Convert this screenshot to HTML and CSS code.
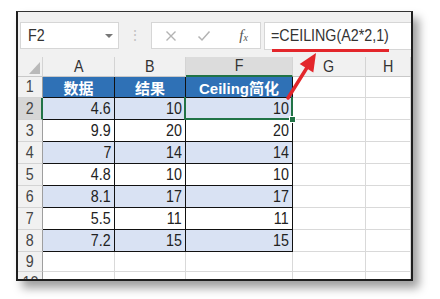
FILE: index.html
```html
<!DOCTYPE html>
<html>
<head>
<meta charset="utf-8">
<link rel="stylesheet" href="styles.css">
</head>
<body>
<div class="frame">
  <div class="fbar">
    <div class="namebox"><span class="nm nx nl">F2</span><span class="dd"></span></div>
    <div class="dots">⋮</div>
    <div class="btnbox">
      <svg class="ic" width="12" height="12" viewBox="0 0 12 12"><path d="M1.5 1.5L10.5 10.5M10.5 1.5L1.5 10.5" stroke="#b3b3b3" stroke-width="1.4" fill="none"/></svg>
      <svg class="ic" width="14" height="12" viewBox="0 0 14 12"><path d="M1.5 6.5L5 10L12.5 1.5" stroke="#b3b3b3" stroke-width="1.5" fill="none"/></svg>
      <span class="fx">f<sub>x</sub></span>
    </div>
    <div class="fbox"><span class="nx nl">=CEILING(A2*2,1)</span></div>
  </div>
  <div class="sheet">
    <div class="ch corner"><span class="tri"></span></div>
    <div class="ch"><span class="nx">A</span></div><div class="ch"><span class="nx">B</span></div><div class="ch chsel"><span class="nx">F</span></div><div class="ch"><span class="nx">G</span></div><div class="ch"><span class="nx">H</span></div>

    <div class="rh"><span class="nx">1</span></div><div class="c t hd">数据</div><div class="c t hd">结果</div><div class="c t hd">Ceiling简化</div><div class="c"></div><div class="c"></div>
    <div class="rh rhsel"><span class="nx">2</span></div><div class="c t b n"><span class="nx nr">4.6</span></div><div class="c t b n"><span class="nx nr">10</span></div><div class="c t b n sel"><span class="nx nr">10</span></div><div class="c"></div><div class="c"></div>
    <div class="rh"><span class="nx">3</span></div><div class="c t n"><span class="nx nr">9.9</span></div><div class="c t n"><span class="nx nr">20</span></div><div class="c t n"><span class="nx nr">20</span></div><div class="c"></div><div class="c"></div>
    <div class="rh"><span class="nx">4</span></div><div class="c t b n"><span class="nx nr">7</span></div><div class="c t b n"><span class="nx nr">14</span></div><div class="c t b n"><span class="nx nr">14</span></div><div class="c"></div><div class="c"></div>
    <div class="rh"><span class="nx">5</span></div><div class="c t n"><span class="nx nr">4.8</span></div><div class="c t n"><span class="nx nr">10</span></div><div class="c t n"><span class="nx nr">10</span></div><div class="c"></div><div class="c"></div>
    <div class="rh"><span class="nx">6</span></div><div class="c t b n"><span class="nx nr">8.1</span></div><div class="c t b n"><span class="nx nr">17</span></div><div class="c t b n"><span class="nx nr">17</span></div><div class="c"></div><div class="c"></div>
    <div class="rh"><span class="nx">7</span></div><div class="c t n"><span class="nx nr">5.5</span></div><div class="c t n"><span class="nx nr">11</span></div><div class="c t n"><span class="nx nr">11</span></div><div class="c"></div><div class="c"></div>
    <div class="rh"><span class="nx">8</span></div><div class="c t b n"><span class="nx nr">7.2</span></div><div class="c t b n"><span class="nx nr">15</span></div><div class="c t b n"><span class="nx nr">15</span></div><div class="c"></div><div class="c"></div>
    <div class="rh"><span class="nx">9</span></div><div class="c"></div><div class="c"></div><div class="c"></div><div class="c"></div><div class="c"></div>
    <div class="rh r10"><span class="nx">10</span></div><div class="c"></div><div class="c"></div><div class="c"></div><div class="c"></div><div class="c"></div>
  </div>
</div>
<svg class="anno" width="440" height="299" viewBox="0 0 440 299">
  <line x1="272" y1="50.5" x2="389" y2="50.5" stroke="#e3262b" stroke-width="3"/>
  <line x1="288" y1="98" x2="308" y2="66" stroke="#e3262b" stroke-width="3.5" stroke-linecap="round"/>
  <polygon points="316,53 313.3,72.5 299.7,64.1" fill="#e3262b"/>
</svg>
</body>
</html>
```
FILE: styles.css
```css
html, body { margin: 0; padding: 0; background: #ffffff; }
body { width: 440px; height: 299px; overflow: hidden; position: relative;
  font-family: "Liberation Sans", Arial, sans-serif; }

.nx { display: inline-block; transform: scaleX(0.84); }
.nl { transform-origin: left center; }
.nr { transform-origin: right center; }

.frame {
  box-sizing: border-box;
  margin: 11px 0 0 16px;
  width: 397px;
  height: 270px;
  border: 2px solid #1e1e1e;
  border-top: 1px solid #333;
  overflow: hidden;
  background: #fff;
  box-shadow: 6px 7px 9px rgba(0,0,0,0.38);
}

.fbar {
  height: 45px;
  background: #f1f1f1;
  display: flex;
  align-items: flex-start;
  padding-top: 10px;
  box-sizing: border-box;
}
.namebox {
  box-sizing: border-box;
  margin-left: 2px;
  width: 100px;
  height: 27px;
  background: #fff;
  border: 1px solid #d6d6d6;
  display: flex;
  align-items: center;
  justify-content: space-between;
  padding: 0 5px 0 7px;
}
.nm { font-size: 17px; color: #333; }
.dd { width: 0; height: 0; border-left: 4px solid transparent; border-right: 4px solid transparent; border-top: 4px solid #777; }
.dots { width: 32px; text-align: center; color: #c2c2c2; font-size: 14px; line-height: 27px; }
.btnbox {
  box-sizing: border-box;
  width: 110px;
  height: 27px;
  background: #fff;
  border: 1px solid #d6d6d6;
  display: flex;
  align-items: center;
  padding-left: 13px;
  gap: 20px;
}
.fx { font-family: "Liberation Serif", serif; font-style: italic; font-size: 15px; color: #555; margin-left: 8px; }
.fx sub { font-size: 10px; vertical-align: -1px; }
.fbox {
  box-sizing: border-box;
  margin-left: 3px;
  flex: 1;
  height: 28px;
  background: #fff;
  border: 1px solid #d6d6d6;
  border-right: none;
  font-size: 17px;
  color: #333;
  padding-left: 6px;
  line-height: 26px;
  white-space: nowrap;
}

.sheet {
  display: grid;
  grid-template-columns: 25px 72px 71px 107px 73px 1fr;
  grid-template-rows: 20px 21px repeat(7, 22px) 20px 20px;
}
.ch {
  box-sizing: border-box;
  background: #f1f1f1;
  border-right: 1px solid #d4d4d4;
  border-bottom: 1px solid #c8c8c8;
  font-size: 17px;
  color: #333;
  display: flex;
  align-items: center;
  justify-content: center;
}
.chsel { background: #dcdcdc; border-bottom: 2px solid #217346; }
.corner { justify-content: flex-end; align-items: flex-end; padding: 0 2px 2px 0; }
.tri { width: 0; height: 0; border-left: 11px solid transparent; border-bottom: 12px solid #b9b9b9; }
.rh {
  box-sizing: border-box;
  background: #f1f1f1;
  border-right: 1px solid #9e9e9e;
  border-bottom: 1px solid #d4d4d4;
  font-size: 17px;
  color: #444;
  display: flex;
  align-items: center;
  justify-content: center;
}
.r10 { align-items: flex-start; padding-top: 1px; }
.rhsel { background: #d6d6d6; border-right: 2px solid #217346; }
.c {
  box-sizing: border-box;
  border-right: 1px solid #d9d9d9;
  border-bottom: 1px solid #d9d9d9;
  font-size: 17px;
  color: #222;
  display: flex;
  align-items: center;
}
.t { border-right: 1px solid #111; border-bottom: 1px solid #111; }
.b { background: #d9e2f3; }
.n { justify-content: flex-end; padding-right: 3px; }
.hd {
  background: #2f71b6;
  color: #fff;
  font-family: "Liberation Sans", Arial, "Noto Sans CJK SC", sans-serif;
  font-weight: bold;
  font-size: 15px;
  justify-content: center;
}
.sel { position: relative; }
.sel::after {
  content: "";
  position: absolute;
  left: -2px; top: -1px; right: -1px; bottom: -1px;
  border: 2px solid #217346;
  border-top: none;
}
.sel::before {
  content: "";
  position: absolute;
  right: -4px; bottom: -4px;
  width: 5px; height: 5px;
  background: #217346;
  border: 1px solid #fff;
  z-index: 2;
}
.anno { position: absolute; left: 0; top: 0; pointer-events: none; }
```
